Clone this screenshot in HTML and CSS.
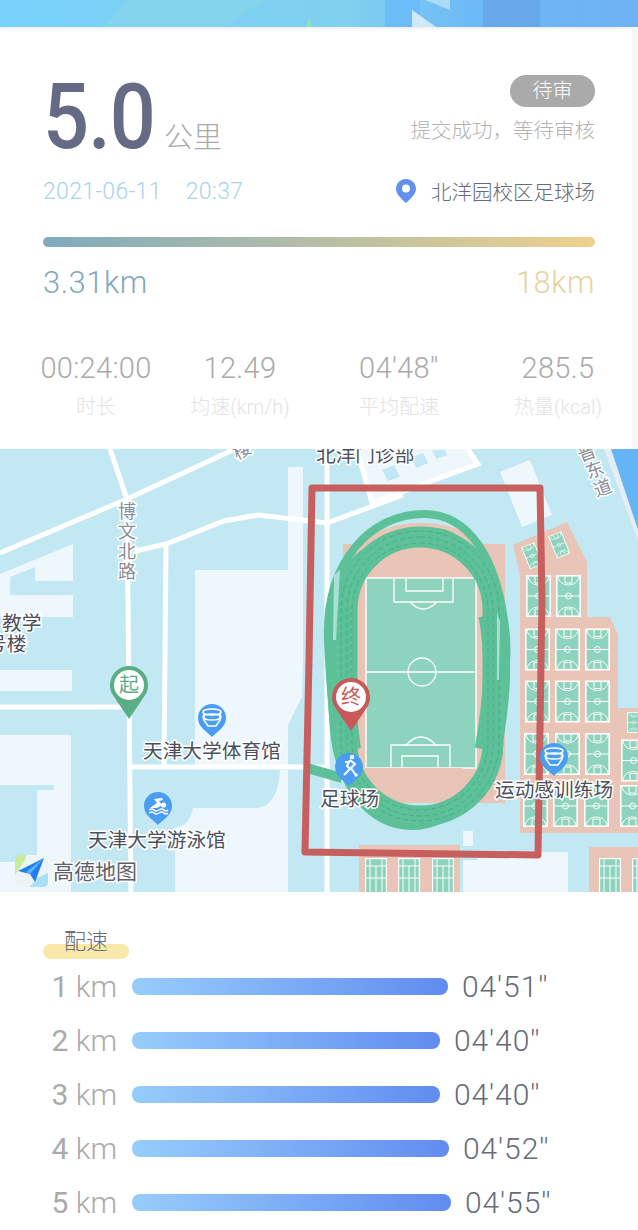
FILE: index.html
```html
<!DOCTYPE html>
<html lang="zh-CN">
<head>
    <meta charset="UTF-8">
    <meta name="viewport" content="width=device-width, initial-scale=1.0">
    <title>跑步详情</title>
    <link rel="stylesheet" href="styles.css">
</head>
<body>
    <div class="banner">
        <svg class="banner-art" viewBox="0 0 638 27" width="638" height="27">
            <defs>
                <linearGradient id="bannerBg" x1="0" x2="1" y1="0" y2="0">
                    <stop offset="0" stop-color="#78d2fb"/>
                    <stop offset="0.55" stop-color="#80d0ee"/>
                    <stop offset="0.75" stop-color="#6db8f8"/>
                    <stop offset="1" stop-color="#6fb2f3"/>
                </linearGradient>
            </defs>
            <rect width="638" height="27" fill="url(#bannerBg)"/>
            <path d="M105 27 L125 0 H265 L225 27Z" fill="#8ad6ea" opacity=".6"/>
            <path d="M385 0 H420 V27 H385Z" fill="#6cbcf8"/>
            <rect x="483" y="0" width="57" height="27" fill="#67a8ea"/>
            <path d="M412 27 V10 L436 27Z" fill="#cfe9f6"/>
            <path d="M425 0 L450 10 V0Z" fill="#a9dcf6"/>
            <path d="M306 27 Q309 10 312 27Z" fill="#8fdcc0"/>
        </svg>
    </div>

    <section class="summary">
        <div class="summary-top">
            <div class="distance">
                <span class="distance-value">5.0</span>
                <span class="distance-unit">公里</span>
            </div>
            <div class="status">
                <span class="status-pill">待审</span>
                <span class="status-note">提交成功，等待审核</span>
            </div>
        </div>
        <div class="meta">
            <span class="meta-time">2021-06-11<span class="meta-gap"></span>20:37</span>
            <span class="meta-place">
                <svg class="place-icon" viewBox="0 0 20 24" width="20" height="24">
                    <path d="M10 0 C4.5 0 0 4.3 0 9.7 C0 15.5 6.5 20.5 10 24 C13.5 20.5 20 15.5 20 9.7 C20 4.3 15.5 0 10 0Z" fill="#6390ee"/>
                    <circle cx="10" cy="9.6" r="4" fill="#fff"/>
                </svg>
                北洋园校区足球场
            </span>
        </div>
        <div class="progress"></div>
        <div class="progress-labels">
            <span class="progress-now">3.31km</span>
            <span class="progress-goal">18km</span>
        </div>
        <div class="stats">
            <div class="stat">
                <span class="stat-value">00:24:00</span>
                <span class="stat-label">时长</span>
            </div>
            <div class="stat">
                <span class="stat-value">12.49</span>
                <span class="stat-label">均速(km/h)</span>
            </div>
            <div class="stat">
                <span class="stat-value">04'48''</span>
                <span class="stat-label">平均配速</span>
            </div>
            <div class="stat">
                <span class="stat-value">285.5</span>
                <span class="stat-label">热量(kcal)</span>
            </div>
        </div>
    </section>

    <div class="map">
        <svg class="map-art" viewBox="0 449 638 443" width="638" height="443">
            <defs>
                <symbol id="court" viewBox="0 0 25 42">
                    <rect x=".8" y=".8" width="23.4" height="40.4" fill="#8dd3bd" stroke="#fff" stroke-width="1.6"/>
                    <path d="M0 21 H25" stroke="#fff" stroke-width="1"/>
                    <circle cx="12.5" cy="21" r="3" fill="none" stroke="#fff" stroke-width="1"/>
                    <path d="M2 1 C3 13 22 13 23 1 M2 41 C3 29 22 29 23 41 M9 1 V8 H16 V1 M9 41 V34 H16 V41" fill="none" stroke="#fff" stroke-width="1"/>
                </symbol>
                <symbol id="tennis" viewBox="0 0 22 34">
                    <rect x=".6" y=".6" width="20.8" height="40" fill="#8dd3bd" stroke="#fff" stroke-width="1.2"/>
                    <path d="M5 0 V34 M17 0 V34 M0 8 H22 M0 20 H22 M11 8 V34" stroke="#fff" stroke-width="1" fill="none"/>
                </symbol>
                <path id="pinShape" d="M0 0 C-3 -4 -14 -9 -14 -19 A14 14 0 0 1 14 -19 C14 -9 3 -4 0 0Z"/>
                <path id="bigPin" d="M0 0 L-15.5 -23 A19 19 0 1 1 15.5 -23Z"/>
            </defs>

            <rect x="0" y="449" width="638" height="443" fill="#c1e8f3"/>

            <!-- light building blocks -->
            <g fill="#eef8fc">
                <path d="M0 574 L73 544 V581 H35 V567 L10 577 V595 H73 V617 H0Z"/>
                <rect x="0" y="670" width="72" height="21"/>
                <path d="M0 735 H71 V892 H37 V790 H54 V785 H0Z"/>
                <rect x="0" y="862" width="37" height="30"/>
                <path d="M195 570 H288 V467 H303 V660 L302 697 L288 725 V765 H195Z"/>
                <path d="M175 892 V828 Q190 825 193 808 H258 Q278 805 280 770 H288 V892Z"/>
                <path d="M500 472 L530 460 L552 515 L522 527Z"/>
                <path d="M463 892 V860 H477 V852 H568 V892Z"/>
                <rect x="463" y="831" width="10" height="15"/>
                <path d="M357 449 H468 L478 464 L372 503Z"/>
            </g>
            <path d="M382 470 L394 465 L400 477 L388 481Z M410 458 L423 453 L428 463 L417 468Z M432 450 H445 L447 455 L436 459Z" fill="#c1e8f3"/>

            <!-- water on the right -->
            <path d="M605 449 H638 V530Z" fill="#64b4f6"/>
            <path d="M611 449 L638 530 V541 L604 449Z" fill="#e4eef4"/>

            <!-- roads -->
            <g fill="none" stroke="#fff" stroke-width="5">
                <path d="M110 449 L127 499"/>
                <path d="M0 553 L127 499 L235 449"/>
                <path d="M127 499 L131 892"/>
                <path d="M135 551 L166 544 L224 521 L258 515 L310 521 L327 523 L403 495"/>
                <path d="M166 545 L164 767"/>
                <path d="M327 449 V892"/>
                <path d="M0 707 H127"/>
                <path d="M131 767 H327"/>
                <path d="M357 449 L372 503 L478 464 L468 449"/>
            </g>

            <!-- stadium -->
            <path d="M343 544 H505 V803 H345Z" fill="#e9c5b7"/>
            <ellipse cx="421" cy="580" rx="80" ry="57" fill="#e9c5b7"/>
            <rect x="366" y="578" width="110" height="190" fill="#8dd3bd" stroke="#fff" stroke-width="1.4"/>
            <g fill="none" stroke="#fff" stroke-width="1.3">
                <path d="M394 579 V602 H453 V579 M406 579 V591 H443 V579"/>
                <path d="M410 602 Q423 616 437 602"/>
                <path d="M366 672 H476"/>
                <circle cx="422" cy="672" r="14"/>
                <path d="M391 768 V745 H450 V768 M402 768 V756 H438 V768"/>
                <path d="M406 745 Q421 729 436 745"/>
            </g>
            <path d="M365 768 H463 Q445 802 413 802 Q378 802 365 768Z" fill="#e9c5b7"/>

            <!-- basketball courts -->
            <path d="M513 545 L567 522 L587 562 V617 H610 L618 635 V708 H638 V833 H520 V575Z" fill="#e9c5b7"/>
            <use href="#court" width="23" height="24" transform="translate(517 549) rotate(-22)"/>
            <use href="#court" width="23" height="24" transform="translate(544 538) rotate(-22)"/>
            <use href="#court" x="526" y="575" width="25" height="42"/>
            <use href="#court" x="556" y="575" width="25" height="42"/>
            <use href="#court" x="525" y="628" width="25" height="43"/>
            <use href="#court" x="555" y="628" width="25" height="43"/>
            <use href="#court" x="585" y="628" width="25" height="43"/>
            <use href="#court" x="525" y="680" width="25" height="43"/>
            <use href="#court" x="555" y="680" width="25" height="43"/>
            <use href="#court" x="585" y="680" width="25" height="43"/>
            <use href="#court" x="524" y="733" width="25" height="42"/>
            <use href="#court" x="555" y="733" width="25" height="42"/>
            <use href="#court" x="585" y="733" width="25" height="42"/>
            <use href="#court" x="523" y="785" width="25" height="42"/>
            <use href="#court" x="553" y="785" width="25" height="42"/>
            <use href="#court" x="584" y="785" width="25" height="42"/>
            <use href="#court" x="621" y="712" width="25" height="21"/>
            <use href="#court" x="621" y="739" width="25" height="43"/>
            <use href="#court" x="620" y="785" width="25" height="42"/>

            <!-- tennis courts -->
            <rect x="359" y="845" width="101" height="47" fill="#e9c5b7"/>
            <rect x="589" y="847" width="49" height="45" fill="#e9c5b7"/>
            <use href="#tennis" x="365" y="858" width="22" height="34"/>
            <use href="#tennis" x="398" y="858" width="22" height="34"/>
            <use href="#tennis" x="432" y="858" width="22" height="34"/>
            <use href="#tennis" x="599" y="858" width="22" height="34"/>
            <use href="#tennis" x="632" y="858" width="22" height="34"/>

            <!-- running route -->
            <g fill="none" stroke="#5cc098">
                <rect x="347" y="537" width="146" height="279" rx="73" stroke-width="21"/>
                <path d="M328 640 C325 560 372 514 424 514 C470 514 496 560 504 620 C511 660 502 690 494 730 C486 790 450 826 412 826 C372 826 340 790 334 730 C332 700 329 670 328 640Z" stroke-width="8"/>
                <path d="M345 590 C338 640 340 700 347 750" stroke-width="28"/>
                <path d="M492 615 C500 660 497 700 488 750" stroke-width="27"/>
                <path d="M338 590 C345 560 385 532 430 532 C470 532 496 580 500 640" stroke-width="9"/>
                <path d="M344 740 C344 790 380 822 414 822 C455 822 490 790 490 735" stroke-width="12"/>
                <path d="M307 768 L342 778" stroke-width="10"/>
            </g>
            <g fill="none" stroke="#3fa67f" stroke-width=".7" stroke-dasharray="5 3">
                <rect x="347" y="537" width="146" height="279" rx="73"/>
                <rect x="341" y="531" width="158" height="290" rx="79"/>
                <rect x="352" y="543" width="136" height="267" rx="68"/>
            </g>
            <path d="M334 575 L340 570 L336 640 L333 640Z M497 612 L500 622 L499 680 L497 680Z" fill="#a9e0d2"/>

            <!-- hand drawn frame -->
            <path class="frame" d="M312 488 H540 L542 600 L538 855 L305 852 L309 660Z"/>

            <!-- place labels -->
            <text class="map-label" x="316" y="462">北洋门诊部</text>
            <text class="map-label" x="2" y="630">教学</text>
            <text class="map-label" x="-13" y="651">号楼</text>
            <text class="map-label road-label" transform="translate(245 456) rotate(-28)" text-anchor="middle">楼</text>
            <g class="map-label road-label" text-anchor="middle">
                <text x="127" y="518">博</text>
                <text x="127" y="538">文</text>
                <text x="127" y="558">北</text>
                <text x="127" y="578">路</text>
                <text transform="translate(589 459) rotate(-20)">晋</text>
                <text transform="translate(597 476) rotate(-20)">东</text>
                <text transform="translate(605 494) rotate(-20)">道</text>
            </g>
            <text class="map-label" x="143" y="758">天津大学体育馆</text>
            <text class="map-label" x="88" y="847">天津大学游泳馆</text>
            <text class="map-label" x="320" y="806">足球场</text>
            <text class="map-label" x="495" y="797">运动感训练场</text>

            <!-- amap logo -->
            <rect x="15" y="855" width="33" height="32" rx="5" fill="#eef4f6"/>
            <path d="M15 875 V860 Q15 855 20 855 H27 L24 862Z" fill="#c7ec9d"/>
            <path d="M30 887 H43 Q48 887 48 882 V873 L37 878Z" fill="#a9e0f6"/>
            <path d="M18 871 L44 858 L35 882 L30 874Z" fill="#1f7fee"/>
            <path d="M44 858 L26 872 L30 874Z" fill="#5fb2fa"/>
            <text class="map-label logo-text" x="53" y="879">高德地图</text>

            <!-- start and end pins -->
            <use href="#bigPin" x="129" y="719" fill="#5aae86"/>
            <circle cx="129" cy="685" r="15" fill="#fff"/>
            <text class="pin-text start-text" x="129" y="692">起</text>
            <use href="#bigPin" x="351" y="731" fill="#c8595a"/>
            <circle cx="351" cy="697" r="15" fill="#fff"/>
            <text class="pin-text end-text" x="351" y="704">终</text>

            <!-- blue poi pins -->
            <use href="#pinShape" x="212" y="737" fill="#4a9df0"/>
            <g fill="none" stroke="#fff" stroke-width="1.5">
                <ellipse cx="212" cy="712" rx="9" ry="3"/>
                <ellipse cx="212" cy="717" rx="9" ry="3"/>
                <path d="M204 714 V720 L208 726 H216 L220 720 V714"/>
            </g>
            <use href="#pinShape" x="158" y="825" fill="#4a9df0"/>
            <circle cx="163.5" cy="805" r="2.6" fill="#fff"/>
            <path d="M150 808 L157 803 L154 799 L162 798 L163 800 L159 801 L162 805 L157 808Z" fill="#fff"/>
            <path d="M149 810 q3 -2 5 0 t5 0 t5 0 t4 0 M149 813 q3 -2 5 0 t5 0 t5 0 t4 0" fill="none" stroke="#fff" stroke-width="1.3"/>
            <use href="#pinShape" x="349" y="786" fill="#4a9df0"/>
            <circle cx="352" cy="757" r="2.2" fill="#fff"/>
            <path d="M350 760 L355 764 L351 768 L355 774 M350 760 L347 766 L350 769 L344 775 M350 762 L345 762" fill="none" stroke="#fff" stroke-width="2"/>
            <circle cx="356" cy="775" r="1.8" fill="#fff"/>
            <use href="#pinShape" x="554" y="776" fill="#4a9df0"/>
            <g fill="none" stroke="#fff" stroke-width="1.5">
                <ellipse cx="554" cy="751" rx="9" ry="3"/>
                <ellipse cx="554" cy="756" rx="9" ry="3"/>
                <path d="M546 753 V759 L550 765 H558 L562 759 V753"/>
            </g>
        </svg>
    </div>

    <section class="pace">
        <h3 class="pace-title"><span>配速</span></h3>
        <div class="pace-row">
            <span class="pace-km"><b>1</b> km</span>
            <div class="pace-bar bar-451"></div>
            <span class="pace-time">04'51''</span>
        </div>
        <div class="pace-row">
            <span class="pace-km"><b>2</b> km</span>
            <div class="pace-bar bar-440"></div>
            <span class="pace-time">04'40''</span>
        </div>
        <div class="pace-row">
            <span class="pace-km"><b>3</b> km</span>
            <div class="pace-bar bar-440"></div>
            <span class="pace-time">04'40''</span>
        </div>
        <div class="pace-row">
            <span class="pace-km"><b>4</b> km</span>
            <div class="pace-bar bar-452"></div>
            <span class="pace-time">04'52''</span>
        </div>
        <div class="pace-row">
            <span class="pace-km"><b>5</b> km</span>
            <div class="pace-bar bar-455"></div>
            <span class="pace-time">04'55''</span>
        </div>
    </section>

    <div class="footer-tabs">
        <div class="footer-tab tab-a"></div>
        <div class="footer-tab tab-b"></div>
        <div class="footer-tab tab-a"></div>
    </div>
</body>
</html>
```

FILE: styles.css
```css
html, body {
    margin: 0;
    height: 1230px;
    overflow: hidden;
}

body {
    width: 638px;
    background-color: #fff;
    font-family: Roboto, "Noto Sans CJK SC", sans-serif;
    color: #aaa;
}

svg {
    display: block;
}

.banner {
    height: 27px;
}

/* top card */
.summary {
    height: 422px;
    box-sizing: border-box;
    padding: 0 37px 0 43px;
    background-color: #fff;
    border-right: 6px solid #f6f6f6;
    box-shadow: inset 0 3px 3px -2px #e3eaee;
}

.summary-top {
    display: flex;
    justify-content: space-between;
    height: 125px;
    padding-top: 48px;
    box-sizing: border-box;
}

.distance {
    display: flex;
    align-items: baseline;
    padding-top: 5px;
}

.distance-value {
    width: 121px;
    font-size: 90px;
    font-weight: 500;
    line-height: 76px;
    letter-spacing: -1px;
    color: #666b85;
    transform: scaleX(.9);
    transform-origin: left;
}

.distance-unit {
    font-size: 29px;
    font-weight: 300;
    color: #aaa;
}

.status {
    display: flex;
    flex-direction: column;
    align-items: flex-end;
}

.status-pill {
    width: 85px;
    height: 32px;
    border-radius: 16px;
    background-color: #aaa;
    color: #fff;
    font-size: 20px;
    font-weight: 300;
    line-height: 32px;
    text-align: center;
}

.status-note {
    margin-top: 10px;
    font-size: 20.5px;
    font-weight: 300;
    line-height: 28px;
    color: #b2b2b2;
}

.meta {
    display: flex;
    justify-content: space-between;
    align-items: center;
    height: 36px;
    margin-top: 21px;
}

.meta-time {
    font-size: 23px;
    font-weight: 300;
    letter-spacing: .35px;
    color: #a7d3ec;
}

.meta-gap {
    display: inline-block;
    width: 24px;
}

.meta-place {
    display: flex;
    align-items: center;
    gap: 15px;
    font-size: 20.5px;
    font-weight: 300;
    color: #666b78;
}

.progress {
    height: 10px;
    margin-top: 28px;
    border-radius: 5px;
    background: linear-gradient(90deg, #7fabbd, #eed18d);
}

.progress-labels {
    display: flex;
    justify-content: space-between;
    margin-top: 15px;
    font-size: 31px;
    font-weight: 300;
    line-height: 42px;
    letter-spacing: .5px;
}

.progress-now {
    color: #7fa9bb;
}

.progress-goal {
    color: #e8d39e;
}

.stats {
    display: grid;
    grid-template-columns: 144px 144px 174px 144px;
    margin: 46px 0 0 -19px;
}

.stat {
    display: flex;
    flex-direction: column;
    align-items: center;
}

.stat-value {
    font-size: 29px;
    font-weight: 300;
    line-height: 36px;
    letter-spacing: .3px;
    white-space: nowrap;
}

.stat-label {
    margin-top: 7px;
    font-size: 20px;
    font-weight: 300;
    line-height: 28px;
    color: #e3e3e3;
    white-space: nowrap;
}

/* map */
.map {
    height: 443px;
    overflow: hidden;
}

.map-label {
    font-family: "Noto Sans CJK SC", sans-serif;
    font-size: 19.7px;
    fill: #4c505c;
    stroke: #fff;
    stroke-width: 3px;
    paint-order: stroke;
}

.road-label {
    font-size: 18px;
    fill: #8a8e96;
}

.logo-text {
    font-size: 21px;
    fill: #5c6068;
}

.frame {
    fill: none;
    stroke: #c85f5f;
    stroke-width: 7;
    stroke-linejoin: round;
}

.pin-text {
    font-family: "Noto Sans CJK SC", sans-serif;
    font-size: 20px;
    text-anchor: middle;
}

.start-text {
    fill: #5aae86;
}

.end-text {
    fill: #c8595a;
}

/* pace list */
.pace {
    padding: 38px 0 0 0;
}

.pace-title {
    position: relative;
    width: 86px;
    height: 29px;
    margin: 0 0 0 43px;
    text-align: center;
    font-size: 22px;
    font-weight: 300;
    line-height: 24px;
    color: #666b78;
}

/* yellow marker behind the title */
.pace-title::before {
    content: "";
    position: absolute;
    left: 0;
    right: 0;
    bottom: 0;
    height: 15px;
    border-radius: 8px;
    background-color: #fae8a8;
}

.pace-title span {
    position: relative;
}

.pace-row {
    display: flex;
    align-items: center;
    height: 54px;
}

.pace-km {
    width: 117px;
    text-align: right;
    font-size: 30px;
    font-weight: 300;
    white-space: nowrap;
    color: #aaa;
}

.pace-km b {
    font-weight: 400;
}

.pace-bar {
    height: 17px;
    margin: 0 14px 0 15px;
    border-radius: 8px;
    background: linear-gradient(90deg, #97cdfb, #618cf0);
}

.bar-440 {
    width: 308px;
}

.bar-451 {
    width: 316px;
}

.bar-452 {
    width: 317px;
}

.bar-455 {
    width: 319px;
}

.pace-time {
    font-size: 30px;
    font-weight: 300;
    letter-spacing: .9px;
    color: #666b78;
    white-space: nowrap;
}

.footer-tabs {
    display: flex;
    gap: 3px;
    margin: 5px 0 0 71px;
}

.footer-tab {
    height: 20px;
    box-sizing: border-box;
    border: 1px solid #eee;
    border-radius: 3px;
}

.tab-a {
    width: 145px;
}

.tab-b {
    width: 200px;
}
```
